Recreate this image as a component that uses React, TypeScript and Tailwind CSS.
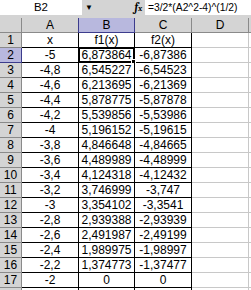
const rows: [string, string, string][] = [
  ['x', 'f1(x)', 'f2(x)'],
  ['-5', '6,873864', '-6,87386'],
  ['-4,8', '6,545227', '-6,54523'],
  ['-4,6', '6,213695', '-6,21369'],
  ['-4,4', '5,878775', '-5,87878'],
  ['-4,2', '5,539856', '-5,53986'],
  ['-4', '5,196152', '-5,19615'],
  ['-3,8', '4,846648', '-4,84665'],
  ['-3,6', '4,489989', '-4,48999'],
  ['-3,4', '4,124318', '-4,12432'],
  ['-3,2', '3,746999', '-3,747'],
  ['-3', '3,354102', '-3,3541'],
  ['-2,8', '2,939388', '-2,93939'],
  ['-2,6', '2,491987', '-2,49199'],
  ['-2,4', '1,989975', '-1,98997'],
  ['-2,2', '1,374773', '-1,37477'],
  ['-2', '0', '0'],
  ['', '', ''],
];

const cell = 'flex items-end justify-center pb-px border-r border-b border-black leading-none';
const emptyCell = 'border-r border-b border-[#c8c8c8]';

export default function App() {
  return (
    <div
      className="w-[251px] h-[290px] overflow-hidden bg-[#d4d4d4] text-black text-[12px]"
      style={{ fontFamily: '"Liberation Sans", Arial, sans-serif' }}
    >
      {/* Formula bar */}
      <div className="flex h-[15px] text-[11.5px] leading-none">
        <div className="w-[82px] bg-white flex items-center justify-center pt-px">B2</div>
        <div className="w-[63px] flex items-center">
          <span className="ml-[3px] text-[8px]">▼</span>
          <span className="ml-auto mr-[3px] italic font-bold font-serif text-[11px]">
            f<span className="text-[8px]">x</span>
          </span>
        </div>
        <div className="flex-1 bg-white flex items-center pl-[3px] pt-px whitespace-nowrap text-[10.3px]">
          =3/2*(A2^2-4)^(1/2)
        </div>
      </div>
      <div className="h-[3px]" />

      {/* Sheet grid */}
      <div className="grid grid-cols-[22px_57px_56px_57px_57px_1fr] auto-rows-[15px] bg-white">
        <div className="bg-[#d4d4d4] border-r border-b border-[#8a8a8a]" />
        <div className="bg-[#d4d4d4] border-r border-b border-[#8a8a8a] flex items-center justify-center">A</div>
        <div className="bg-[#b8b8de] border-x border-b border-[#3c3c8c] -ml-px flex items-center justify-center">B</div>
        <div className="bg-[#d4d4d4] border-r border-b border-[#8a8a8a] flex items-center justify-center">C</div>
        <div className="bg-[#d4d4d4] border-r border-b border-[#8a8a8a] flex items-center justify-center">D</div>
        <div className="bg-[#d4d4d4] border-b border-[#8a8a8a]" />

        {rows.map((r, i) => {
          const n = i + 1;
          const selected = n === 2;
          const last = n === 18;
          return [
            <div
              key={`h${n}`}
              className={
                selected
                  ? 'bg-[#b8b8de] border-r border-b border-[#3c3c8c] flex items-center justify-center'
                  : 'bg-[#d4d4d4] border-r border-b border-[#8a8a8a] flex items-center justify-center'
              }
            >
              {last ? '' : n}
            </div>,
            <div key={`a${n}`} className={cell}>{r[0]}</div>,
            <div key={`b${n}`} className={`${cell} relative`}>
              {r[1]}
              {selected && (
                <div className="absolute -left-px -top-px right-[-1px] bottom-[-1px] border-2 border-black">
                  <div className="absolute -right-[3px] -bottom-[3px] w-[5px] h-[5px] bg-black border border-white" />
                </div>
              )}
            </div>,
            <div key={`c${n}`} className={cell}>{r[2]}</div>,
            <div key={`d${n}`} className={emptyCell} />,
            <div key={`e${n}`} className="border-b border-[#c8c8c8]" />,
          ];
        })}
      </div>
    </div>
  );
}
